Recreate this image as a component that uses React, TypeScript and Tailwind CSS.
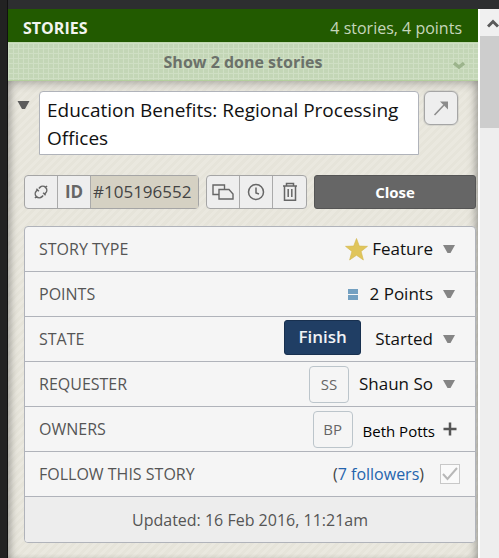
import { useState } from "react";
import type { ReactNode } from "react";

function DownTriangle({ className }: { className: string }) {
  return (
    <svg viewBox="0 0 12 8" className={className} aria-hidden="true">
      <path d="M0 0h12L7.5 8h-3z" fill="currentColor" />
    </svg>
  );
}

function Row({ label, htmlFor, children }: { label: string; htmlFor: string; children: ReactNode }) {
  return (
    <div className="flex h-[45px] items-center border-b border-[#b0b3ba] pr-5 pl-3.5">
      <label htmlFor={htmlFor} className="grow text-[16px] text-[#555]">
        {label}
      </label>
      {children}
    </div>
  );
}

function Picker({ id, options }: { id: string; options: string[] }) {
  return (
    <span className="flex items-center gap-2.5">
      <select
        id={id}
        className="field-sizing-content appearance-none bg-transparent text-right text-[17px] leading-6 text-[#111]"
      >
        {options.map((o) => (
          <option key={o}>{o}</option>
        ))}
      </select>
      <DownTriangle className="h-2 w-3 text-[#858585]" />
    </span>
  );
}

function Initials({ children }: { children: string }) {
  return (
    <span className="mr-2.5 flex h-[37px] w-10 items-center justify-center rounded border border-[#bcc5cb] text-[15px] text-[#666]">
      {children}
    </span>
  );
}

const iconButton = "flex w-[33px] shrink-0 items-center justify-center text-[#666]";

function App() {
  const [following, setFollowing] = useState(true);

  return (
    <div className="flex min-h-screen flex-col bg-[#2d2e30] pt-[9px] font-['Open_Sans','Noto_Sans',sans-serif]">
      <div className="flex grow">
        <div className="-mt-[9px] w-2 shrink-0 border-r border-[#111] bg-[#222]" />
        <main className="flex min-w-0 grow flex-col">
          <header className="flex h-[33px] items-center justify-between bg-[#225a00] pr-4 pl-[15px] pt-1">
            <h1 className="text-[16px] font-bold text-[#f2f5ef]">STORIES</h1>
            <span className="text-[16px] text-[#c6d6bb]">4 stories, 4 points</span>
          </header>
          <button className="relative h-[39px] border-y border-t-[#c0d8b0] border-b-[#b3cf9c] bg-[#c3d6b6] bg-[linear-gradient(#cfdfc4_1px,transparent_1px),linear-gradient(90deg,#cfdfc4_1px,transparent_1px)] bg-[size:5px_5px] text-[16px] font-bold text-[#6b716a]">
            Show 2 done stories
            <svg viewBox="0 0 12 9" className="absolute top-[18px] right-[13px] h-[9px] w-3" fill="none" stroke="#9cb48c" strokeWidth="3.4" aria-hidden="true">
              <path d="M1 2l5 4 5-4" />
            </svg>
          </button>
          <section className="grow bg-[repeating-linear-gradient(135deg,#e6e4da_0_3px,#eae8df_3px_6px)] pt-2.5 pr-0.5 pl-4 shadow-[inset_0_4px_8px_#00000030,inset_8px_0_10px_-6px_#00000040,inset_-8px_0_10px_-6px_#00000040]">
            <div className="flex items-start pr-[18px]">
              <button aria-label="Collapse story" className="-ml-[7px] mt-2.5 mr-[9px]">
                <DownTriangle className="h-2 w-[13px] text-[#5c5c5c]" />
              </button>
              <textarea
                aria-label="Story title"
                rows={2}
                defaultValue="Education Benefits: Regional Processing Offices"
                className="mr-[5px] h-16 min-w-0 grow resize-none overflow-hidden rounded-t border border-[#b0b3ba] bg-white px-[7px] pt-1 text-[19px] leading-7 text-[#111]"
              />
              <button aria-label="Open story" className="flex h-[34px] w-[34px] items-center justify-center rounded-md border border-[#a5a5a5] bg-[#eee] shadow-[0_0_0_1px_#a5a5a540]">
                <svg viewBox="0 0 16 16" className="size-4" aria-hidden="true">
                  <path d="M1.500 15L11 5" stroke="#8b8b8b" strokeWidth="1.500" />
                  <path d="M7 1.500h8v8z" fill="#8b8b8b" />
                </svg>
              </button>
            </div>

            <div className="mt-5 flex h-[34px] gap-[7px]">
              <div className="flex w-[175px] divide-x divide-[#aaa] rounded-sm border border-[#a5a5a5] bg-[#eee]">
                <button aria-label="Copy link" className={iconButton}>
                  <svg viewBox="0 0 16 16" className="size-4" fill="none" stroke="currentColor" strokeWidth="1.500" aria-hidden="true">
                    <g transform="rotate(-45 8 8)">
                      <path d="M7 4H5.500a4 4 0 0 0 0 8H7M9 4h1.500a4 4 0 0 1 0 8H9M7 2.500v3.500M9 10v3.500M14.500 8h2M-.5 8h2" />
                    </g>
                  </svg>
                </button>
                <button className="flex w-[33px] shrink-0 items-center justify-center text-[17px] font-bold text-[#666]">ID</button>
                <input
                  aria-label="Story ID"
                  readOnly
                  value="#105196552"
                  className="min-w-0 grow bg-[#d5d1c3] px-0.5 text-[17px] text-[#444]"
                />
              </div>
              <div className="flex divide-x divide-[#aaa] rounded-sm border border-[#a5a5a5] bg-[#eee]">
                <button aria-label="Duplicate story" className={iconButton}>
                  <svg viewBox="0 0 22 16" className="h-4 w-[22px]" fill="none" stroke="currentColor" strokeWidth="1.400" aria-hidden="true">
                    <path d="M6.500 10.500H1V1h11.500v4M7 5.500h10l4 4.500v5H7z" />
                  </svg>
                </button>
                <button aria-label="Story history" className={iconButton}>
                  <svg viewBox="0 0 18 18" className="size-[18px]" fill="none" stroke="currentColor" strokeWidth="1.500" aria-hidden="true">
                    <circle cx="9" cy="9" r="7.500" />
                    <path d="M9 4.500V10l3 1" />
                  </svg>
                </button>
                <button aria-label="Delete story" className={iconButton}>
                  <svg viewBox="0 0 16 20" className="h-5 w-4" fill="none" stroke="currentColor" strokeWidth="1.500" aria-hidden="true">
                    <path d="M1 4h14M2.500 4v14.200h11V4M4.500 4V1.500h7V4M6.200 7v8M9.800 7v8" />
                  </svg>
                </button>
              </div>
              <button className="grow rounded-[3px] border border-[#555] bg-[#666] text-[15px] font-bold text-white">
                Close
              </button>
            </div>

            <form className="mt-[17px] overflow-hidden rounded border border-[#b0b3ba] bg-[#f5f5f5]">
              <Row label="STORY TYPE" htmlFor="type">
                <svg viewBox="0 0 22 22" className="mr-1 size-[23px]" aria-hidden="true">
                  <path d="M11 .5l2.700 7.200 7.800.3-6.100 4.800 2.200 8.200-6.600-4.500L4.400 21l2.200-8.200L.5 8l7.800-.3z" fill="#e0c55a" stroke="#d3b94e" strokeWidth=".6" />
                </svg>
                <Picker id="type" options={["Feature", "Bug", "Chore"]} />
              </Row>
              <Row label="POINTS" htmlFor="points">
                <span className="mr-3 flex flex-col gap-px">
                  <span className="h-[5px] w-2.5 bg-[#73a0c1]" />
                  <span className="h-[5px] w-2.5 bg-[#73a0c1]" />
                </span>
                <Picker id="points" options={["2 Points", "1 Point"]} />
              </Row>
              <Row label="STATE" htmlFor="state">
                <button type="button" className="mr-3.5 mb-1 h-[35px] w-[77px] rounded-[3px] border border-[#18304f] bg-[#203e64] text-[17px] font-semibold text-[#f0f2f5]">
                  Finish
                </button>
                <Picker id="state" options={["Started", "Unstarted"]} />
              </Row>
              <Row label="REQUESTER" htmlFor="requester">
                <Initials>SS</Initials>
                <Picker id="requester" options={["Shaun So", "Beth Potts"]} />
              </Row>
              <Row label="OWNERS" htmlFor="owners">
                <Initials>BP</Initials>
                <span className="mt-1 text-[15px] text-black">Beth Potts</span>
                <button type="button" id="owners" aria-label="Add owner" className="-mr-0.5 ml-2">
                  <svg viewBox="0 0 14 14" className="size-3.5" stroke="#555" strokeWidth="2.500" aria-hidden="true">
                    <path d="M7 .5v13M.5 7h13" />
                  </svg>
                </button>
              </Row>
              <Row label="FOLLOW THIS STORY" htmlFor="follow">
                <span className="mr-4 text-[16px] text-[#444]">
                  (<a href="#followers" className="text-[#2464ad]">7 followers</a>)
                </span>
                <span className="relative -mr-[5px] flex">
                  <input
                    id="follow"
                    type="checkbox"
                    checked={following}
                    onChange={(e) => setFollowing(e.target.checked)}
                    className="peer size-5 appearance-none border border-[#c8c8c8] bg-[#fafafa]"
                  />
                  <svg viewBox="0 0 20 20" className="pointer-events-none absolute inset-0 hidden size-5 peer-checked:block" fill="none" stroke="#b8b8b8" strokeWidth="2" aria-hidden="true">
                    <path d="M3 10l4.500 5L17 4" />
                  </svg>
                </span>
              </Row>
              <p className="flex h-[45px] items-center justify-center bg-[#ededed] text-[16px] text-[#555]">
                Updated: 16 Feb 2016, 11:21am
              </p>
            </form>
          </section>
        </main>
        <div className="w-[21px] shrink-0 border-l-2 border-white bg-[#eee]">
          <div className="flex h-[27px] items-center justify-center bg-[#f0f0f0] pl-[7px]">
            <svg viewBox="0 0 12 10" className="h-2.5 w-3" fill="none" stroke="#5a5a5a" strokeWidth="3" aria-hidden="true">
              <path d="M1 8.500l5-5 5 5" />
            </svg>
          </div>
          <div className="h-[92px] bg-[#cdcdcd]" />
        </div>
      </div>
    </div>
  );
}

export default App;
